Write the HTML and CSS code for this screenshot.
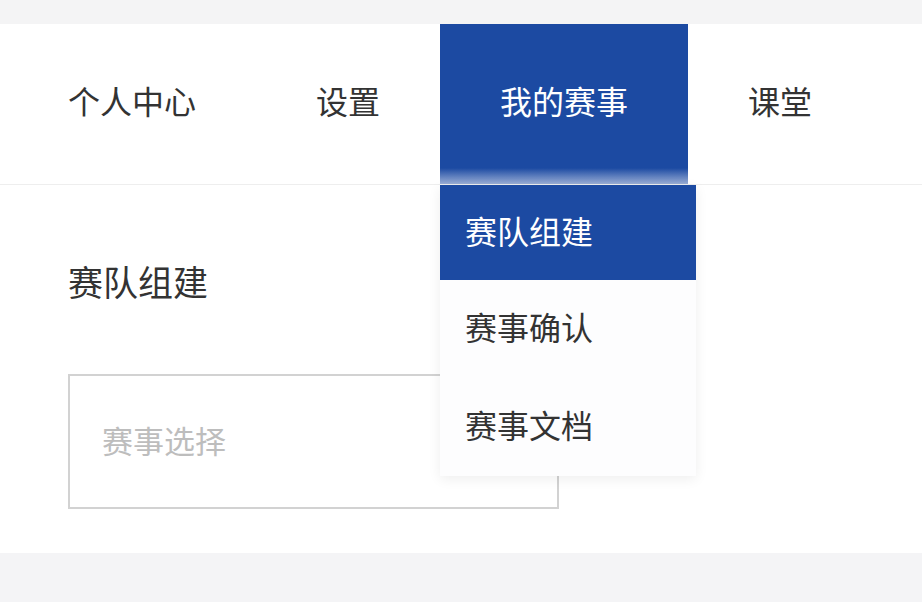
FILE: index.html
```html
<!DOCTYPE html>
<html>
<head>
<meta charset="utf-8" />
<title>赛队组建</title>
<link rel="stylesheet" href="styles.css">
</head>
<body>
	<div class="topbar"></div>
	<div class="header">
		<div class="nav">
			<div class="nav-item">个人中心</div>
			<div class="nav-item">设置</div>
			<div class="nav-item active">
				<span>我的赛事</span>
				<div class="dropdown">
					<div class="dropdown-item current">赛队组建</div>
					<div class="dropdown-item">赛事确认</div>
					<div class="dropdown-item">赛事文档</div>
				</div>
			</div>
			<div class="nav-item">课堂</div>
		</div>
	</div>
	<div class="content">
		<h2 class="title">赛队组建</h2>
		<div class="select-box">
			<span class="placeholder">赛事选择</span>
		</div>
	</div>
	<div class="footer"></div>
</body>
</html>
```

FILE: styles.css
```css
* {
	margin: 0;
	padding: 0;
	box-sizing: border-box;
}
html,body {
	width: 100%;
	height: 100%;
	overflow: hidden;
}
body {
	background: #f4f4f5;
	font-family: "Noto Sans CJK SC", "Noto Sans", sans-serif;
	color: #333;
}
.topbar {
	height: 24px;
}
.header {
	background: #fff;
	height: 161px;
	border-bottom: 1px solid #eeeeee;
}
.nav {
	display: flex;
	height: 160px;
	padding-left: 8px;
}
.nav-item {
	position: relative;
	display: flex;
	align-items: center;
	padding: 0 60px 8px;
	font-size: 32px;
	color: #333;
	white-space: nowrap;
}
.nav-item.active {
	background: linear-gradient(to bottom, #1c4aa2 0, #1c4aa2 144px, #9aaed6 160px);
	color: #fff;
}
.dropdown {
	position: absolute;
	top: 161px;
	left: 0;
	width: 256px;
	background: #fdfdfe;
	box-shadow: 0 3px 12px rgba(0,0,0,0.07);
	z-index: 2;
}
.dropdown-item {
	height: 98px;
	display: flex;
	align-items: center;
	padding: 0 0 6px 25px;
	font-size: 32px;
	color: #333;
}
.dropdown-item.current {
	height: 95px;
	background: #1c4aa2;
	color: #fff;
}
.content {
	background: #fff;
	height: 368px;
	padding: 71px 68px 0;
}
.title {
	font-size: 35px;
	font-weight: normal;
	line-height: 50px;
	color: #333;
}
.select-box {
	margin-top: 68px;
	width: 491px;
	height: 135px;
	border: 2px solid #d2d2d2;
	display: flex;
	align-items: center;
	padding: 0 0 5px 32px;
}
.placeholder {
	font-size: 31px;
	color: #bdbdbd;
}
.footer {
	height: 49px;
	background: #f4f4f6;
}
```
